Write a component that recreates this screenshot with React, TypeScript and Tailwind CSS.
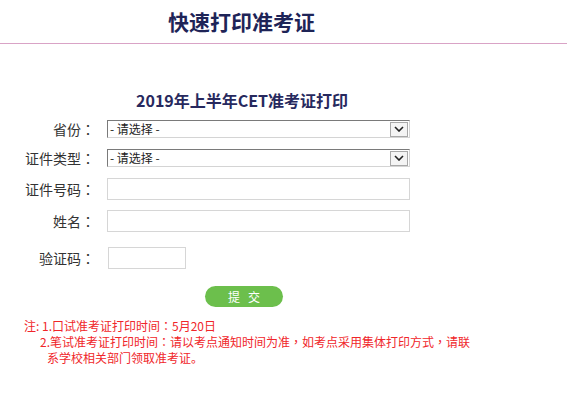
import React from "react";

const FONT = { fontFamily: '"Noto Sans CJK SC", "Noto Sans", sans-serif' };
const TC = { fontFamily: '"Noto Sans CJK TC", sans-serif' };

// centered full-width punctuation, like the reference font
function P({ c }: { c: string }) {
  return <span style={TC}>{c}</span>;
}

function Label({ text }: { text: string }) {
  return (
    <div className="w-[95px] shrink-0 text-right text-[14px] text-[#333] leading-[18px]">
      {text}
      <P c="：" />
    </div>
  );
}

function FakeSelect() {
  return (
    <div className="ml-[12px] flex h-[18px] w-[303px] items-center border border-t-[#7a7a7a] border-l-[#7a7a7a] border-b-[#d4d4d4] border-r-[#d4d4d4] bg-white">
      <span className="flex-1 pl-[2px] text-[12px] leading-[14px] text-[#222]">- 请选择 -</span>
      <span className="mr-[1px] flex h-[15px] w-[18px] items-center justify-center border border-[#a8a8a8] bg-[#f4f4f4]">
        <svg width="10" height="6" viewBox="0 0 10 6">
          <path d="M1 1 L5 5 L9 1" fill="none" stroke="#222" strokeWidth="1.6" />
        </svg>
      </span>
    </div>
  );
}

function TextBox({ w }: { w: string }) {
  return <div className={`ml-[12px] h-[22px] ${w} border border-[#d6d6d6] bg-white`} />;
}

export default function App() {
  return (
    <div className="h-[400px] w-[567px] bg-white" style={FONT}>
      {/* Header */}
      <div className="h-[43px] pl-[168px] pt-[7px]">
        <h1 className="text-[21px] font-bold leading-[28px] text-[#1e2457]">快速打印准考证</h1>
      </div>
      <div className="h-px bg-[#d9a3c6]" />

      <div className="pt-[46px]">
        <h2 className="pl-[136px] text-[16px] font-bold leading-[20px] text-[#27295e]">2019年上半年CET准考证打印</h2>

        <div className="mt-[10px] flex items-center">
          <Label text="省份" />
          <FakeSelect />
        </div>
        <div className="mt-[11px] flex items-center">
          <Label text="证件类型" />
          <FakeSelect />
        </div>
        <div className="mt-[11px] flex items-center">
          <Label text="证件号码" />
          <TextBox w="w-[303px]" />
        </div>
        <div className="mt-[10px] flex items-center">
          <Label text="姓名" />
          <TextBox w="w-[303px]" />
        </div>
        <div className="mt-[15px] flex items-center">
          <Label text="验证码" />
          <div className="ml-[13px] h-[22px] w-[78px] border border-[#d6d6d6] bg-white" />
        </div>

        <div className="mt-[14px] pl-[205px]">
          <button className="h-[21px] w-[78px] rounded-full bg-[#6cbf4c] text-[12px] leading-[21px] text-white">
            提&nbsp;&nbsp;&nbsp;交
          </button>
        </div>

        <div className="mt-[11px] text-[12px] leading-[16px] text-[#f0262a]">
          <p className="pl-[24px]">
            注: 1.口试准考证打印时间<P c="：" />5月20日
          </p>
          <p className="pl-[40px]">
            2.笔试准考证打印时间<P c="：" />请以考点通知时间为准<P c="，" />如考点采用集体打印方式<P c="，" />请联
          </p>
          <p className="pl-[47px]">系学校相关部门领取准考证。</p>
        </div>
      </div>
    </div>
  );
}
